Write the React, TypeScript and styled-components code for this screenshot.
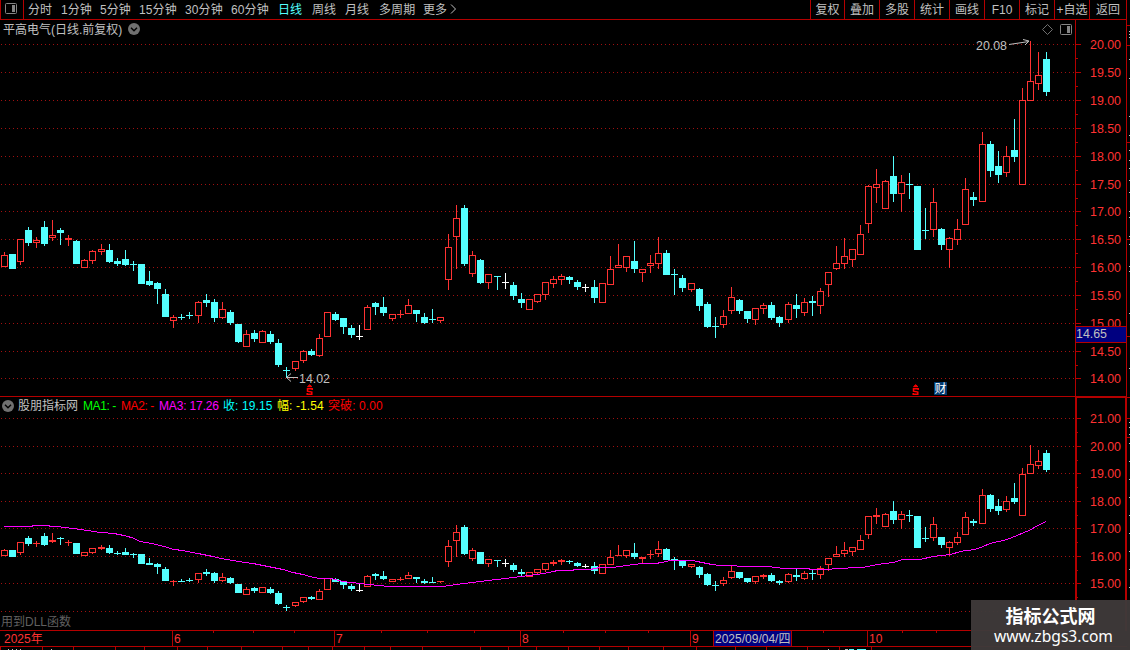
import React from "react";
import styled, { createGlobalStyle } from "styled-components";

const RED = "#b40000";
const UP = "#ff3232";
const DOWN = "#54ffff";
const GRID = "#a01010";
const TEXT = "#c0c0c0";
const FONT = '"Liberation Sans", "Noto Sans CJK SC", sans-serif';

const Global = createGlobalStyle`
  body { margin: 0; background: #000; overflow: hidden; }
  * { box-sizing: border-box; }
`;

const Screen = styled.div`
  position: relative;
  width: 1130px;
  height: 650px;
  display: flex;
  flex-direction: column;
  background: #000;
  color: ${TEXT};
  font: 12px/16px ${FONT};
  white-space: nowrap;
`;

const Toolbar = styled.nav`
  display: flex;
  height: 20px;
  width: 1127px;
  flex: none;
  border-bottom: 1px solid ${RED};
  line-height: 20px;
`;

const LayoutToggle = styled.div`
  width: 24px;
  border: solid ${RED};
  border-width: 0 1px 0 1px;
  display: flex;
  align-items: center;
  padding: 0 0 3px 4px;
`;

const Periods = styled.div`
  display: flex;
  flex: 1;
  padding-left: 4px;
`;

const Period = styled.span<{ $w: number; $active?: boolean }>`
  width: ${(p) => p.$w}px;
  color: ${(p) => (p.$active ? DOWN : TEXT)};
  letter-spacing: 0.1px;
`;

const Action = styled.span<{ $w: number }>`
  width: ${(p) => p.$w}px;
  border-left: 1px solid ${RED};
  text-align: center;
  &:last-child { border-right: 1px solid ${RED}; }
`;

const Panel = styled.section<{ $h: number }>`
  display: grid;
  grid-template-columns: 1075px 55px;
  height: ${(p) => p.$h}px;
  flex: none;
`;

const Plot = styled.div`
  display: flex;
  flex-direction: column;
  border-bottom: 1px solid ${RED};
`;

const PlotHeader = styled.header<{ $h: number; $pad: number }>`
  display: flex;
  align-items: center;
  height: ${(p) => p.$h}px;
  padding-left: ${(p) => p.$pad}px;
  flex: none;
`;

const Title = styled.span`
  width: 125px;
  padding-top: 1px;
`;

const HeaderTools = styled.div`
  display: flex;
  align-items: center;
  gap: 7px;
  margin-left: auto;
  padding-right: 3px;
`;

const ToggleSlot = styled.span`
  display: flex;
  width: 16px;
`;

const Reading = styled.span<{ $w: number; $c?: string; $track?: number }>`
  width: ${(p) => p.$w}px;
  color: ${(p) => p.$c ?? TEXT};
  letter-spacing: ${(p) => p.$track ?? 0}px;
`;

const Drawing = styled.svg`
  display: block;
  flex: none;
  font: 12.5px ${FONT};
`;

const Note = styled.div`
  color: #606060;
  height: 17px;
  line-height: 18px;
  padding-left: 1px;
`;

const Timeline = styled.footer`
  display: flex;
  height: 16px;
  width: 1127px;
  flex: none;
  border-bottom: 1px solid ${RED};
  color: ${UP};
  line-height: 16px;
`;

const Month = styled.span<{ $w: number; $first?: boolean }>`
  width: ${(p) => p.$w}px;
  border-left: ${(p) => (p.$first ? "none" : `1px solid ${RED}`)};
  padding-left: ${(p) => (p.$first ? 4 : 1)}px;
`;

const CursorDate = styled.span`
  width: 79px;
  background: #000080;
  border: solid ${RED};
  border-width: 0 1px;
  color: ${TEXT};
  padding-left: 1px;
  overflow: hidden;
`;

const RulerMarks = styled.svg`
  display: block;
  margin-top: -16px;
  flex: none;
`;

const Watermark = styled.aside`
  position: absolute;
  left: 971px;
  top: 600px;
  width: 159px;
  height: 50px;
  background: rgba(62, 57, 57, 0.97);
  color: #fff;
  display: flex;
  flex-direction: column;
  align-items: center;
`;

const WatermarkName = styled.strong`
  font: 700 18px/20px "Noto Sans CJK SC", sans-serif;
  margin-top: 5px;
`;

const WatermarkUrl = styled.span`
  font: 15.6px/20px "Noto Sans", sans-serif;
  margin-top: 1px;
  padding-left: 6px;
`;

/* x, high, body top, body bottom, low, kind (r: up, c: down, w: flat) */
type Kind = "r" | "c" | "w";
type Candle = [number, number, number, number, number, Kind];

const CANDLES: Candle[] = [
  [4,252,255,267,267,"r"],[12,254,254,269,269,"c"],[20,239,239,262,265,"r"],[28,227,230,243,246,"c"],
  [36,237,240,243,248,"r"],[44,221,227,244,246,"c"],[52,220,235,238,241,"r"],[60,228,230,233,245,"c"],
  [68,235,238,240,246,"r"],[76,240,241,264,264,"c"],[84,259,260,268,268,"r"],[92,250,251,261,264,"r"],
  [101,244,249,252,255,"r"],[109,244,250,262,263,"c"],[117,258,261,264,266,"c"],[125,250,259,265,266,"c"],
  [133,261,264,265,271,"c"],[141,264,264,284,284,"c"],[149,271,281,285,286,"c"],[157,282,283,289,304,"c"],
  [165,289,294,317,317,"c"],[173,315,317,321,328,"r"],[181,314,317,318,320,"c"],[189,312,315,316,319,"c"],
  [198,301,302,316,323,"r"],[206,294,300,303,307,"c"],[214,299,302,318,322,"c"],[222,302,309,318,319,"r"],
  [230,310,312,323,325,"c"],[238,324,324,342,343,"c"],[246,330,334,347,347,"r"],[254,330,333,339,342,"c"],
  [262,330,331,343,343,"r"],[270,331,334,342,344,"c"],[278,339,343,365,367,"c"],[286,367,370,371,378,"c"],
  [295,361,361,369,371,"r"],[303,350,351,361,363,"r"],[311,349,351,355,356,"c"],[319,334,338,356,357,"r"],
  [327,312,312,337,337,"r"],[335,312,314,320,321,"c"],[343,318,318,327,334,"c"],[351,325,328,335,338,"c"],
  [359,325,336,337,340,"w"],[367,305,307,330,330,"r"],[375,302,303,307,315,"c"],[383,297,307,313,316,"c"],
  [392,314,314,319,321,"r"],[400,310,314,315,318,"r"],[408,299,305,314,314,"r"],[416,310,310,314,322,"c"],
  [424,313,317,323,324,"c"],[432,309,319,320,323,"c"],[440,317,317,321,323,"r"],[448,234,247,280,290,"r"],
  [456,205,218,237,269,"r"],[464,205,208,264,266,"c"],[472,251,255,274,277,"r"],[480,259,260,283,284,"c"],
  [488,274,274,283,289,"r"],[497,276,276,277,290,"c"],[505,273,282,283,289,"w"],[513,282,285,296,300,"c"],
  [521,293,299,303,308,"c"],[529,299,299,310,310,"r"],[537,294,294,302,303,"r"],[545,282,282,295,300,"r"],
  [553,276,279,284,288,"r"],[561,274,276,280,285,"r"],[569,276,277,280,284,"c"],[577,280,282,287,290,"c"],
  [585,284,287,288,292,"w"],[594,280,287,298,303,"c"],[602,283,283,303,303,"r"],[610,256,269,285,285,"r"],
  [618,244,265,268,268,"r"],[626,256,256,268,272,"r"],[634,241,261,269,273,"c"],[642,269,269,273,282,"r"],
  [650,255,263,266,273,"r"],[658,237,253,264,269,"r"],[666,250,253,275,275,"c"],[674,269,274,275,295,"c"],
  [682,275,278,288,292,"c"],[691,283,283,290,292,"r"],[699,288,289,306,311,"c"],[707,302,304,327,328,"c"],
  [715,317,326,327,338,"c"],[723,310,316,325,328,"r"],[731,287,297,311,314,"r"],[739,299,300,311,314,"c"],
  [747,311,311,319,323,"c"],[755,308,308,320,325,"r"],[763,303,305,309,314,"r"],[771,302,305,318,320,"c"],
  [779,316,317,323,327,"c"],[788,302,304,320,323,"r"],[796,294,305,309,318,"c"],[804,298,302,313,316,"r"],
  [812,296,301,303,316,"c"],[820,288,291,306,314,"r"],[828,272,272,285,297,"r"],[836,246,263,269,270,"r"],
  [844,238,256,264,269,"r"],[852,249,249,260,267,"r"],[860,225,234,255,255,"r"],[868,185,186,224,233,"r"],
  [876,169,184,188,203,"r"],[885,180,181,209,209,"r"],[893,156,176,194,202,"c"],[901,175,182,194,212,"r"],
  [909,173,184,185,199,"c"],[917,186,186,250,250,"c"],[925,208,230,231,239,"c"],[933,188,202,230,237,"r"],
  [941,228,229,245,250,"c"],[949,237,238,250,268,"r"],[957,219,229,240,245,"r"],[965,178,189,225,225,"r"],
  [973,192,197,200,206,"c"],[982,132,144,202,202,"r"],[990,141,144,171,177,"c"],[998,151,166,175,183,"c"],
  [1006,146,156,173,177,"r"],[1014,119,150,157,162,"c"],[1022,88,100,185,185,"r"],[1030,41,81,101,101,"r"],
  [1038,52,75,84,90,"r"],[1046,52,59,92,96,"c"],
];

const same = (y: number) => y;
/* The indicator pane plots the same prices at half the price scale. */
const compact = (y: number) => Math.round(446.1 + (y - 44) * 0.4924);

const COLORS: Record<Kind, string> = { r: UP, c: DOWN, w: "#ffffff" };

function Candles({ map }: { map: (y: number) => number }) {
  return (
    <g>
      {CANDLES.map(([x, h, t, b, l, k]) => {
        const top = map(t);
        const bottom = Math.max(map(b), top + 1);
        const high = map(h);
        const low = Math.max(map(l), bottom);
        const c = COLORS[k];
        const hollow = k === "r" && bottom - top > 2;
        return (
          <g key={x} fill={c}>
            <rect x={x} y={high} width={1} height={Math.max(0, top - high)} />
            <rect x={x} y={bottom} width={1} height={low - bottom} />
            {hollow ? (
              <rect x={x - 2.5} y={top + 0.5} width={6} height={bottom - top - 1} fill="#000" stroke={c} />
            ) : (
              <rect x={x - 3} y={top} width={7} height={bottom - top} />
            )}
          </g>
        );
      })}
    </g>
  );
}

function GridLines({ rows }: { rows: number[] }) {
  return (
    <g stroke={GRID} strokeDasharray="1 3">
      {rows.map((y) => (
        <line key={y} x1={1} x2={1075} y1={y + 0.5} y2={y + 0.5} />
      ))}
    </g>
  );
}

const MAIN_ROWS = [44, 72, 100, 128, 156, 184, 211, 239, 267, 295, 323, 351, 378];
const SUB_ROWS = [418, 446, 473, 501, 528, 556, 583, 611];

const MA_LINE =
  "4,526.5 32,526.5 33,525.5 49,525.5 50,526.5 57,526.5 65,527.5 81,529.5 97,532 114,533.5 124,535.5 133,538 140,541.5 152,543.5 164,546.5 172,549 185,551 203,554.5 213,556.5 222,558.7 233,560.6 242,562 253,563.5 273,567.5 283,569.5 293,572.5 303,574.5 312,577 319,578.5 331,578.5 343,581.5 360,583.5 368,584.5 380,585.5 388,586.5 443,586.5 456,584.5 472,582.5 488,580.5 505,578.5 521,576.5 537,574.5 544,573.5 554,571.5 557,570.5 573,570.5 574,569.5 590,569.5 600,567.5 613,567.5 626,565.5 642,563.5 655,563.5 662,562.5 670,560.5 693,560.5 698,561.7 712,564.5 720,565.5 736,565.5 738,566.5 768,566.5 784,568.5 808,568.5 811,569.5 831,569.5 833,568.5 847,568.5 849,567.5 863,567.5 877,564.5 893,562.5 903,559.5 920,559.5 933,556.5 950,554.5 963,551 975,549.5 983,546.5 990,543.5 1007,539.5 1017,535.5 1030,530 1038,525.5 1046,521.5";

function Arrow({ d }: { d: string }) {
  return <path d={d} fill="none" stroke={TEXT} />;
}

function Dividend({ x }: { x: number }) {
  return (
    <g stroke="#ff0000" fill="none" strokeWidth={1.5}>
      <path d={`M${x + 5.7} 390V388.700H${x + 1}V391.200L${x + 5.300} 392V394.300H${x + 0.700}V393`} />
      <path d={`M${x + 1} 386.700l2.200-2 2.200 2z`} strokeWidth={1} fill="#ff0000" />
    </g>
  );
}

function PriceAxis({
  top, height, rows, labels, minor, heavy, edge, children,
}: {
  top: number; height: number; rows: number[]; labels: string[]; minor: number[];
  heavy?: boolean; edge: [number, boolean][]; children?: React.ReactNode;
}) {
  const w = heavy ? 2 : 1;
  return (
    <Drawing width={55} height={height} viewBox={`1075 ${top} 55 ${height}`}>
      <g fill={RED}>
        <rect x={1075} y={top} width={w} height={height} />
        <rect x={1127 - w} y={top} width={w} height={height} />
        {rows.map((y) => <rect key={y} x={1076} y={y} width={5} height={1} />)}
        {minor.map((y) => <rect key={y} x={1076} y={y} width={2} height={1} />)}
        {heavy && <rect x={1075} y={top} width={52} height={1} />}
      </g>
      {edge.map(([y, line]) => (
        <rect key={y} x={line ? 1127 : 1129} y={y} width={line ? 3 : 1} height={1} fill={line ? RED : TEXT} />
      ))}
      <g fill={UP}>
        {labels.map((s, i) => (
          <text key={s} x={1090} y={rows[i] + 5} textLength={31} lengthAdjust="spacingAndGlyphs">{s}</text>
        ))}
      </g>
      {children}
    </Drawing>
  );
}

function RoundToggle() {
  return (
    <svg width="12" height="12" viewBox="0 0 12 12">
      <circle cx="6" cy="6" r="6" fill="#707070" />
      <path d="M3 4.7l3 3 3-3" fill="none" stroke="#000" strokeWidth="1.4" />
    </svg>
  );
}

function SplitIcon() {
  return (
    <svg width="12" height="11" viewBox="0 0 12 11">
      <rect x=".5" y=".5" width="11" height="10" rx="1" fill="none" stroke="#858585" />
      <rect x="7" y="2" width="3" height="7" fill="#858585" />
    </svg>
  );
}

const TICKS = [213, 253, 294, 381, 427, 474, 563, 605, 648, 823, 902, 936];
const STRIP_TICKS = [0, 42, 73, 115, 144, 177, 207, 241, 282, 308, 332, 364, 390, 422, 480, 508, 536, 568, 599, 628, 663, 696, 735, 766, 807, 839, 871];

function Ruler() {
  return (
    <RulerMarks width={1130} height={19} viewBox="0 631 1130 19">
      <g fill={RED}>
        {TICKS.map((x) => <rect key={x} x={x} y={631} width={1} height={2} />)}
        {STRIP_TICKS.map((x) => <rect key={x} x={x} y={647} width={1} height={3} />)}
      </g>
      <g fill={TEXT}>
        {[8, 12, 16, 20, 51, 828].map((x) => <rect key={x} x={x} y={649} width={1} height={1} />)}
        <rect x={845} y={649} width={3} height={1} />
        <rect x={849} y={649} width={5} height={1} fill={DOWN} />
        <rect x={857} y={649} width={9} height={1} fill={DOWN} />
      </g>
    </RulerMarks>
  );
}

const PERIODS: [string, number][] = [
  ["分时", 33], ["1分钟", 39], ["5分钟", 39], ["15分钟", 46], ["30分钟", 46], ["60分钟", 47],
  ["日线", 34], ["周线", 33], ["月线", 34], ["多周期", 44], ["更多", 27],
];
const ACTIONS: [string, number][] = [
  ["复权", 34], ["叠加", 35], ["多股", 35], ["统计", 35], ["画线", 35], ["F10", 35],
  ["标记", 35], ["+自选", 35], ["返回", 38],
];

export default function App() {
  return (
    <Screen>
      <Global />
      <Toolbar>
        <LayoutToggle><SplitIcon /></LayoutToggle>
        <Periods>
          {PERIODS.map(([s, w]) => <Period key={s} $w={w} $active={s === "日线"}>{s}</Period>)}
          <svg width="8" height="18" viewBox="0 0 8 18">
            <path d="M1 4.5l4.5 4.5L1 13.5" fill="none" stroke={TEXT} />
          </svg>
        </Periods>
        {ACTIONS.map(([s, w]) => <Action key={s} $w={w}>{s}</Action>)}
      </Toolbar>

      <Panel $h={377}>
        <Plot>
          <PlotHeader $h={18} $pad={3}>
            <Title>平高电气(日线.前复权)</Title>
            <RoundToggle />
            <HeaderTools>
              <svg width="11" height="11" viewBox="0 0 11 11">
                <path d="M5.5 .5l5 5-5 5-5-5z" fill="none" stroke="#707070" />
              </svg>
              <SplitIcon />
            </HeaderTools>
          </PlotHeader>
          <Drawing width={1075} height={358} viewBox="0 38 1075 358">
            <GridLines rows={MAIN_ROWS} />
            <Candles map={same} />
            <g fill={TEXT}>
              <text x={976} y={50} textLength={31} lengthAdjust="spacingAndGlyphs">20.08</text>
              <text x={299} y={383} textLength={31} lengthAdjust="spacingAndGlyphs">14.02</text>
            </g>
            <Arrow d="M1009 44.5L1029 41.5M1023 39.5l6 1.5-4 4" />
            <Arrow d="M298 377.5H286.5M291 373.5l-4.5 4 4.5 4" />
            <Dividend x={306.5} />
            <Dividend x={912.5} />
            <rect x={934} y={382} width={13} height={13} fill="#003a70" />
            <text x={934.5} y={393} fontSize={12} fill="#fff">财</text>
          </Drawing>
        </Plot>
        <PriceAxis
          top={20} height={377} rows={MAIN_ROWS}
          labels={["20.00", "19.50", "19.00", "18.50", "18.00", "17.50", "17.00", "16.50", "16.00", "15.50", "15.00", "14.50", "14.00"]}
          minor={[58, 86, 114, 142, 170, 198, 225, 253, 281, 309, 337, 365]}
          edge={[[25, true], [31, false], [34, false], [37, false], [45, true], [59, false], [78, false], [116, false], [135, false], [142, true], [150, false], [160, false], [168, false], [180, false], [192, false], [211, false], [217, false], [236, false], [239, true], [244, false], [266, false], [271, false], [313, false], [336, true], [368, false]]}
        >
          <rect x={1075} y={396} width={52} height={1} fill={RED} />
          <rect x={1076} y={326} width={50} height={17} fill={RED} />
          <rect x={1076} y={327} width={50} height={15} fill="#000080" />
          <text x={1076} y={338} fill={TEXT} textLength={31} lengthAdjust="spacingAndGlyphs">14.65</text>
        </PriceAxis>
      </Panel>

      <Panel $h={234}>
        <Plot>
          <PlotHeader $h={17} $pad={2}>
            <ToggleSlot><RoundToggle /></ToggleSlot>
            <Reading $w={65}>股朋指标网</Reading>
            <Reading $w={38} $c="#00ff00" $track={-0.4}>MA1: -</Reading>
            <Reading $w={38} $c="#ff0000" $track={-0.4}>MA2: -</Reading>
            <Reading $w={64} $c="#ff00ff" $track={-0.15}>MA3: 17.26</Reading>
            <Reading $w={54} $c="#00ffff" $track={0.1}>收: 19.15</Reading>
            <Reading $w={51} $c="#ffff00" $track={0.1}>幅: -1.54</Reading>
            <Reading $w={60} $c="#ff0000" $track={0.1}>突破: 0.00</Reading>
          </PlotHeader>
          <Drawing width={1075} height={199} viewBox="0 414 1075 199">
            <GridLines rows={SUB_ROWS} />
            <Candles map={compact} />
            <polyline points={MA_LINE} fill="none" stroke="#ff00ff" shapeRendering="crispEdges" />
          </Drawing>
          <Note>用到DLL函数</Note>
        </Plot>
        <PriceAxis
          heavy top={397} height={234} rows={SUB_ROWS}
          labels={["21.00", "20.00", "19.00", "18.00", "17.00", "16.00", "15.00"]}
          minor={[432, 460, 487, 515, 542, 570, 597]}
          edge={[[397, true], [418, true], [422, false], [427, false], [434, false], [437, true], [443, false], [461, false], [479, false], [497, false], [515, false], [533, false], [551, false], [569, false], [587, false]]}
        />
      </Panel>

      <Timeline>
        <Month $first $w={172}>2025年</Month>
        <Month $w={162}>6</Month>
        <Month $w={186}>7</Month>
        <Month $w={170}>8</Month>
        <Month $w={23}>9</Month>
        <CursorDate>2025/09/04/四</CursorDate>
        <Month $w={75} $first />
        <Month $w={100}>10</Month>
      </Timeline>
      <Ruler />
      <Watermark>
        <WatermarkName>指标公式网</WatermarkName>
        <WatermarkUrl>www.zbgs3.com</WatermarkUrl>
      </Watermark>
    </Screen>
  );
}
